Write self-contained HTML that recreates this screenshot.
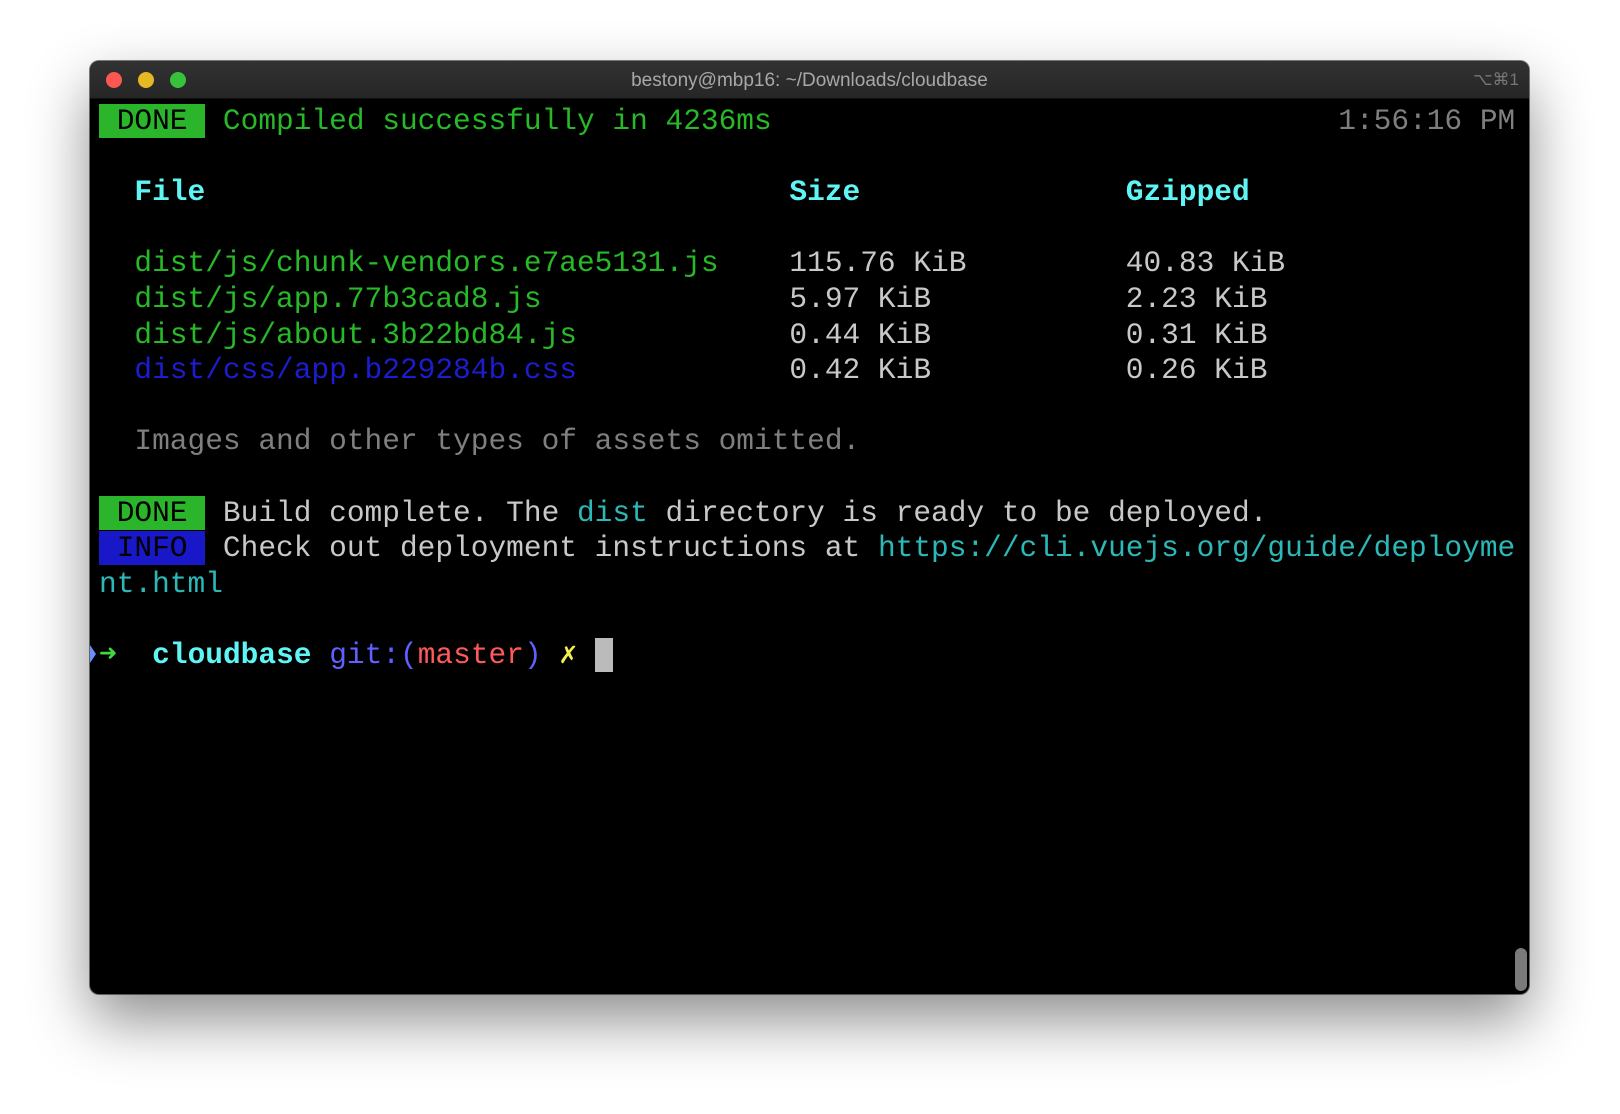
<!DOCTYPE html>
<html><head><meta charset="utf-8"><style>
html,body{margin:0;padding:0;width:1620px;height:1114px;background:#fff;overflow:hidden}
.win{position:absolute;left:90px;top:61px;width:1439px;height:933px;background:#000;border-radius:9px;overflow:hidden;
box-shadow:0 26px 60px rgba(0,0,0,.45),0 0 0 1px rgba(0,0,0,.5)}
.tb{position:absolute;left:0;top:0;width:100%;height:37px;background:linear-gradient(#323232,#262626);border-bottom:1px solid #111}
.dot{position:absolute;top:11px;width:16px;height:16px;border-radius:50%}
.ttl{position:absolute;left:0;right:0;top:9px;text-align:center;font:19px "Liberation Sans",sans-serif;color:#a8a8a8}
.sc{position:absolute;right:10px;top:9px;font:17px "Liberation Sans","DejaVu Sans",sans-serif;color:#777}
pre{position:absolute;left:9px;top:43px;margin:0;font:29.5px/35.6px "Liberation Mono","DejaVu Sans Mono",monospace;color:#c8c8c8;white-space:pre}
.g{color:#27b927}.c{color:#5ff5f5;font-weight:bold}.b{color:#1c1cd0}.gr{color:#7f7f7f}.t{color:#2db8b8}
.bd{background:#2ab52a;color:#000}.bi{background:#1818c8;color:#000}
.sb{position:absolute;left:1425px;top:887px;width:12px;height:43px;border-radius:6px;background:#7a7a7a}
.tri{position:absolute;left:0;top:584px;width:0;height:0;border-left:6px solid #6a8cff;border-top:9px solid transparent;border-bottom:9px solid transparent}
</style></head><body>
<div class="win">
<div class="tb">
<div class="dot" style="left:16px;background:#fc5753"></div>
<div class="dot" style="left:48px;background:#e6b823"></div>
<div class="dot" style="left:80px;background:#36c23c"></div>
<div class="ttl">bestony@mbp16: ~/Downloads/cloudbase</div>
<div class="sc">⌥⌘1</div>
</div>
<pre><span class="bd"> DONE </span> <span class="g">Compiled successfully in 4236ms</span>                                <span class="gr">1:56:16 PM</span>

  <span class="c">File</span>                                 <span class="c">Size</span>               <span class="c">Gzipped</span>

  <span class="g">dist/js/chunk-vendors.e7ae5131.js</span>    115.76 KiB         40.83 KiB
  <span class="g">dist/js/app.77b3cad8.js</span>              5.97 KiB           2.23 KiB
  <span class="g">dist/js/about.3b22bd84.js</span>            0.44 KiB           0.31 KiB
  <span class="b">dist/css/app.b229284b.css</span>            0.42 KiB           0.26 KiB

  <span class="gr">Images and other types of assets omitted.</span>

<span class="bd"> DONE </span> Build complete. The <span class="t">dist</span> directory is ready to be deployed.
<span class="bi"> INFO </span> Check out deployment instructions at <span class="t">https://cli.vuejs.org/guide/deployme</span>
<span class="t">nt.html</span>

<span style="color:#3fd83f">➜</span>  <span class="c">cloudbase</span> <span style="color:#6060ff">git:(</span><span style="color:#ff5a5a">master</span><span style="color:#6060ff">)</span> <span style="color:#f0f050">✗</span> <span style="background:#bbb"> </span></pre>
<div class="tri"></div>
<div class="sb"></div>
</div>
</body></html>
